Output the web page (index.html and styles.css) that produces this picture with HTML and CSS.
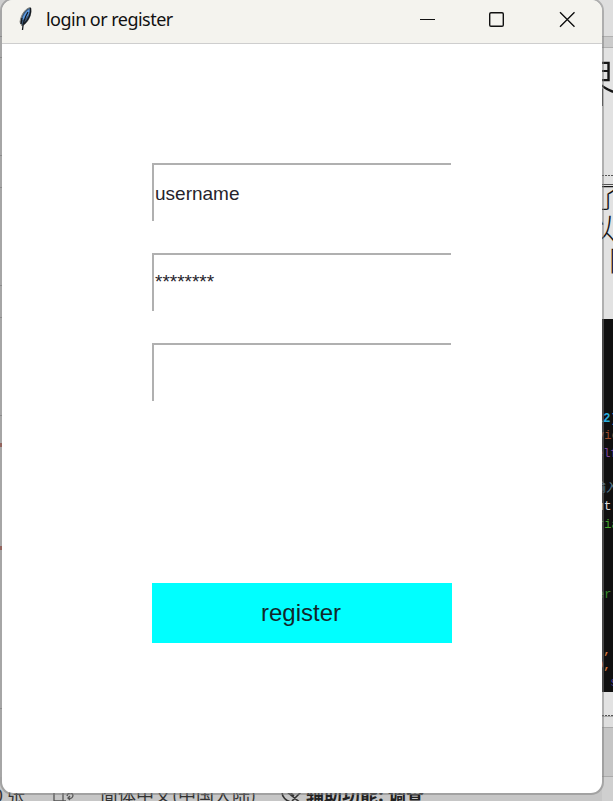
FILE: index.html
```html
<!DOCTYPE html>
<html lang="en">
<head>
<meta charset="utf-8">
<title>login or register</title>
<link rel="stylesheet" href="styles.css">
</head>
<body>
<div class="desktop">
  <div class="edge">
    <i class="tick t1"></i><i class="tick t2"></i><i class="tick t3"></i><i class="tick t4"></i><i class="tick t5"></i><i class="tick t6"></i><i class="tick t7"></i><i class="tick t8"></i>
    <i class="mark m1"></i><i class="mark m2"></i>
  </div>
  <div class="document">
    <div class="ruler"></div>
    <div class="page">
      <span class="glyph heading">界</span>
      <span class="glyph line-a">了</span>
      <span class="glyph line-b">以</span>
      <span class="glyph line-c">同</span>
      <i class="dash d1"></i><i class="rule"></i><i class="dash d2"></i>
    </div>
    <div class="code">
      <span class="c1">12)</span>
      <span class="c2">vie</span>
      <span class="c3">elf</span>
      <span class="c4">输入</span>
      <span class="c5">ut</span>
      <span class="c6">ria</span>
      <span class="c7">er</span>
      <span class="c8">',</span>
      <span class="c9">0,</span>
      <span class="c10">&nbsp;s</span>
    </div>
  </div>
  <div class="status">
    <span class="s0">0</span>
    <span class="s1">张</span>
    <svg class="s2" width="22" height="18" viewBox="0 0 22 18" fill="none" stroke="#555" stroke-width="1.3"><path d="M10 0v9M1 0v9h9h3M14 4c1-4 5-4 6-1M20 3c0 3-2 4-5 3l2-2M15 6l2 2"/></svg>
    <span class="s3">简体中文(中国大陆)</span>
    <svg class="s4" width="22" height="18" viewBox="0 0 22 18" fill="none" stroke="#333" stroke-width="1.6"><path d="M1 2c0 5 4 9 9 10M6 2l15 12M20 2l-9 9M9 2l4 4"/></svg>
    <b class="s5">辅助功能: 调查</b>
  </div>
  <main class="window">
    <header class="titlebar">
      <svg class="feather" width="16" height="26" viewBox="0 0 16 26"><path d="M12.5 1.500C8 2 3 8 2 16l2 4 3-2c4-4 7-10 5.500-16.500z" fill="#3b5878" stroke="#85857f"/><path d="M11.500 3C8 5 5 9 4 14l3-1c3-3 5-6 4.500-10z" fill="#5b9be4"/><path d="M12.500 2C13.500 8 10 14 6 18M10 6C7 11 5 15 4.500 24M4 12l-1 6" fill="none" stroke="#14191f" stroke-width="1.300"/></svg>
      <h1>login or register</h1>
      <svg class="controls" width="156" height="18" viewBox="0 0 156 18" fill="none" stroke="#111" stroke-width="1.4"><path d="M0 9.5h15" stroke-width="1"/><rect x="69.7" y="2.7" width="13.6" height="13.6" rx="1.3"/><path d="M140 2.3l14.5 14.5M154.5 2.3L140 16.8"/></svg>
    </header>
    <form class="form">
      <div class="field">username</div>
      <div class="field secret">********</div>
      <div class="field"></div>
      <button type="button">register</button>
    </form>
  </main>
</div>
</body>
</html>
```
FILE: styles.css
```css
* { box-sizing: border-box; }
body { margin: 0; overflow: hidden; }
.desktop { position: relative; width: 613px; height: 801px; overflow: hidden; background: #c6c6c6; }

.window {
  position: absolute; left: 0; top: -2px; width: 604px; height: 797px;
  display: flex; flex-direction: column;
  border: 2px solid rgba(125, 125, 125, .5); border-radius: 13px;
  background: #fff; background-clip: padding-box; overflow: hidden;
}
.titlebar {
  flex: none; display: flex; align-items: flex-start; height: 44px;
  border-bottom: 1px solid #cecece; background: #f4f3ee;
}
.feather { margin: 6px 0 0 16px; }
h1 { margin: 7px 0 0 12px; font: 400 18px/24px "Noto Sans", sans-serif; letter-spacing: -.53px; color: #111; width: 160px; white-space: nowrap; }
.controls { margin: 10px 0 0 214px; }

.form { display: flex; flex-direction: column; gap: 32px; width: 300px; margin: 119px 0 0 150px; }
.field {
  width: 299px; height: 58px; padding-left: 1px;
  font: 400 19px/57px "Liberation Sans", sans-serif; color: #26232b;
  border: solid #b0b0b0; border-width: 2px 0 0 2px;
  border-image: linear-gradient(#b0b0b0, #b0b0b0) 1;
}
.secret { line-height: 54px; }
button {
  height: 60px; margin-top: 150px; padding: 0 2px 0 0; border: 0; background: #0ff;
  font: 400 24px/60px "Liberation Sans", sans-serif; color: #12282b;
}

.edge { position: absolute; left: 0; top: 0; width: 12px; height: 801px; background: #cecece; }
.tick { position: absolute; left: 0; width: 12px; height: 1px; background: #989898; }
.t1 { top: 36px; } .t2 { top: 57px; } .t3 { top: 155px; } .t4 { top: 187px; }
.t5 { top: 285px; } .t6 { top: 317px; } .t7 { top: 415px; } .t8 { top: 708px; }
.mark { position: absolute; left: 0; width: 4px; height: 4px; background: #a64b3c; }
.m1 { top: 443px; } .m2 { top: 546px; }

.document { position: absolute; left: 560px; top: 0; width: 53px; height: 801px; overflow: hidden; background: linear-gradient(#dedede 727px, #aaa 727px, #aaa 728px, #c5c5c5 728px, #c5c5c5 776px, #aaa 776px, #aaa 777px, #cfcfcf 777px); }
.ruler { position: absolute; left: 0; right: 0; top: 36px; height: 12px; background: #cbcbcb; border: solid #b0b0b0; border-width: 1px 0; }
.page { position: absolute; left: 0; right: 0; top: 48px; height: 669px; background: #e2e2e2; border-bottom: 1px solid #aaa; }
.glyph { position: absolute; font-family: "Noto Sans CJK SC", sans-serif; font-weight: 300; color: #151515; line-height: 1; }
.heading { left: 8px; top: 7px; font-size: 50px; }
.line-a { left: 34px; top: 134px; font-size: 28px; }
.line-b { left: 26px; top: 163px; font-size: 30px; }
.line-c { left: 49px; top: 197px; font-size: 28px; }
.dash { position: absolute; left: 0; right: 0; height: 1px; background: repeating-linear-gradient(90deg, #555 0 2px, transparent 2px 3px); }
.d1 { top: 127px; } .d2 { top: 667px; }
.rule { position: absolute; left: 0; right: 0; top: 136px; height: 1px; background: #555; }
.code { position: absolute; left: 0; right: 0; top: 319px; height: 373px; background: #101010; font: 12px/16px "Liberation Mono", "Noto Sans CJK SC", monospace; }
.code span { position: absolute; left: 37px; white-space: pre; }
.code .c1 { top: 92px; color: #2aaede; font-weight: 700; left: 36px; }
.code .c2 { top: 109px; color: #9b4a2b; }
.code .c3 { top: 127px; color: #80459a; left: 36px; }
.code .c4 { top: 162px; color: #56788c; left: 34px; }
.code .c5 { top: 180px; color: #ddd; left: 36px; font-size: 13px; }
.code .c6 { top: 198px; color: #44a52d; }
.code .c7 { top: 268px; color: #388a2b; }
.code .c8 { top: 324px; color: #d07338; left: 36px; font-weight: 700; }
.code .c9 { top: 339px; color: #d07338; left: 36px; font-weight: 700; }
.code .c10 { top: 356px; color: #51429a; left: 43px; }

.status { position: absolute; left: 0; top: 777px; width: 602px; height: 24px; background: #c6c6c6; color: #333; font: 18px/26px "Noto Sans CJK SC", sans-serif; }
.status > * { position: absolute; top: 4px; white-space: nowrap; }
.s0 { left: -7px; }
.s1 { left: 7px; }
.status .s2 { left: 53px; top: 15px; }
.s3 { left: 100px; }
.status .s4 { left: 281px; top: 13px; }
.s5 { left: 306px; color: #222; }
```
